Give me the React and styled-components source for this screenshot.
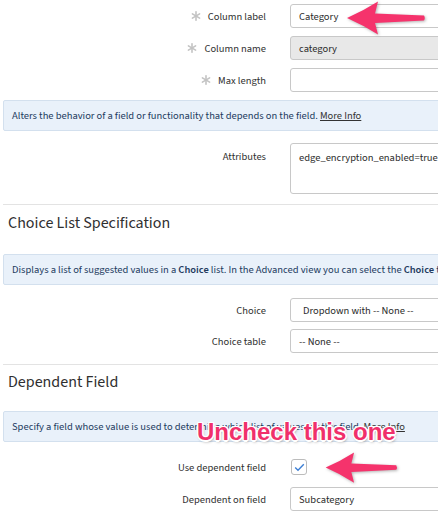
import React from 'react';
import styled, { createGlobalStyle } from 'styled-components';

const GlobalStyle = createGlobalStyle`
  html, body {
    margin: 0;
    padding: 0;
    background: #fff;
    overflow: hidden;
  }
  body {
    font-family: "Source Sans 3", Lato, "Open Sans", sans-serif;
    color: #333;
  }
`;

const Page = styled.div`
  position: relative;
  width: 560px;
  padding: 4px 0 0 3px;
  display: flex;
  flex-direction: column;
`;

const Fields = styled.div`
  display: flex;
  flex-direction: column;
  gap: ${(p) => p.gap || 8}px;
  padding: ${(p) => p.pad || '0'};
`;

const Row = styled.div`
  display: grid;
  grid-template-columns: 263px 1fr;
  column-gap: 24px;
  align-items: ${(p) => (p.top ? 'start' : 'center')};
`;

const Label = styled.label`
  display: flex;
  justify-content: flex-end;
  align-items: center;
  gap: 7px;
  font-size: 10.5px;
  color: #2f2f2f;
  padding-top: ${(p) => (p.top ? '6px' : '0')};
`;

const Input = styled.div`
  box-sizing: border-box;
  width: 260px;
  height: ${(p) => (p.tall ? 51 : 24)}px;
  border: 1px solid #c8c8c8;
  border-radius: 3px;
  background: ${(p) => (p.readOnly ? '#e8e8e8' : '#fff')};
  font-size: 10.5px;
  color: #2b2b2b;
  padding: ${(p) => (p.tall ? '6px 8px' : '0 8px')};
  display: flex;
  align-items: ${(p) => (p.tall ? 'flex-start' : 'center')};
  padding-left: ${(p) => (p.indent ? 12 : 8)}px;
`;

const Info = styled.div`
  box-sizing: border-box;
  height: 31px;
  margin: ${(p) => p.margin};
  background: #e9f1fa;
  border: 1px solid #d3e0ee;
  border-radius: 2px;
  font-size: 10.5px;
  color: #223a5e;
  padding: 0 8px;
  display: flex;
  align-items: center;
  white-space: nowrap;

  a {
    color: #333;
    text-decoration: underline;
  }
  b {
    font-weight: 600;
  }
`;

const Divider = styled.hr`
  border: 0;
  border-top: 1px solid #e3e3e3;
  margin: ${(p) => p.margin};
`;

const Heading = styled.h2`
  margin: ${(p) => p.margin};
  padding-left: 5px;
  font-size: 16px;
  font-weight: 400;
  color: #2f2f2f;
  line-height: 20px;
`;

const Check = styled.div`
  box-sizing: border-box;
  width: 16px;
  height: 16px;
  margin-left: 1px;
  border: 1px solid #bcbcbc;
  border-radius: 3px;
  display: flex;
  align-items: center;
  justify-content: center;
`;

const Callout = styled.div`
  position: absolute;
  left: 197px;
  top: 418px;
  font-family: "Liberation Sans", Arial, sans-serif;
  font-weight: 700;
  font-size: 24px;
  color: #f0306b;
  white-space: nowrap;
  text-shadow:
    1.5px 0 0 #fff, -1.5px 0 0 #fff, 0 1.5px 0 #fff, 0 -1.5px 0 #fff,
    1px 1px 0 #fff, -1px -1px 0 #fff, 1px -1px 0 #fff, -1px 1px 0 #fff,
    1px 2px 3px rgba(0, 0, 0, 0.35);
`;

const ArrowBox = styled.svg`
  position: absolute;
  left: ${(p) => p.x}px;
  top: ${(p) => p.y}px;
  filter: drop-shadow(1px 1px 1.5px rgba(0, 0, 0, 0.3));
`;

const Star = () => (
  <svg width="10" height="10" viewBox="0 0 10 10">
    <g stroke="#c3c3c3" strokeWidth="1.6" strokeLinecap="round">
      <line x1="5" y1="0.8" x2="5" y2="9.2" />
      <line x1="1.4" y1="2.9" x2="8.6" y2="7.1" />
      <line x1="1.4" y1="7.1" x2="8.6" y2="2.9" />
    </g>
  </svg>
);

const Arrow = ({ x, y, w, h }) => (
  <ArrowBox x={x} y={y} width={w} height={h} viewBox="0 0 80 36">
    <path
      d="M2 18 Q18 11 33 1.5 L30 13.5 L79 15.5 Q80.5 18 79 20.5 L30 23 L33 34.5 Q18 25 2 18 Z"
      fill="#f5336c"
    />
  </ArrowBox>
);

const Field = ({ label, required, children, top }) => (
  <Row top={top}>
    <Label top={top}>
      {required && <Star />}
      {label}
    </Label>
    {children}
  </Row>
);

export default function App() {
  return (
    <>
      <GlobalStyle />
      <Page>
        <Fields>
          <Field label="Column label" required>
            <Input>Category</Input>
          </Field>
          <Field label="Column name" required>
            <Input readOnly>category</Input>
          </Field>
          <Field label="Max length" required>
            <Input />
          </Field>
        </Fields>

        <Info margin="8px 0 0 0">
          Alters the behavior of a field or functionality that depends on the field.&nbsp;
          <a>More Info</a>
        </Info>

        <Fields pad="12px 0 0 0">
          <Field label="Attributes" top>
            <Input tall>edge_encryption_enabled=true</Input>
          </Field>
        </Fields>

        <Divider margin="10px 0 0 0" />
        <Heading margin="8px 0 0 0">Choice List Specification</Heading>

        <Info margin="21px 0 0 0">
          Displays a list of suggested values in a&nbsp;<b>Choice</b>&nbsp;list. In the Advanced view you can select the&nbsp;<b>Choice</b>&nbsp;table
        </Info>

        <Fields gap={7} pad="13px 0 0 0">
          <Field label="Choice">
            <Input indent>Dropdown with -- None --</Input>
          </Field>
          <Field label="Choice table">
            <Input>-- None --</Input>
          </Field>
        </Fields>

        <Divider margin="11px 0 0 0" />
        <Heading margin="7px 0 0 0">Dependent Field</Heading>

        <Info margin="19px 0 0 0">
          Specify a field whose value is used to determine which list of values for this field.&nbsp;
          <a>More Info</a>
        </Info>

        <Fields gap={12} pad="17px 0 0 0">
          <Field label="Use dependent field">
            <Check>
              <svg width="11" height="9" viewBox="0 0 11 9">
                <path d="M1.2 4.6 L4 7.3 L9.8 1.3" fill="none" stroke="#3d7fd4" strokeWidth="1.4" />
              </svg>
            </Check>
          </Field>
          <Field label="Dependent on field">
            <Input>Subcategory</Input>
          </Field>
        </Fields>

        <Arrow x={345} y={0} w={80} h={36} />
        <Arrow x={322} y={451} w={77} h={33} />
        <Callout>Uncheck this one</Callout>
      </Page>
    </>
  );
}
